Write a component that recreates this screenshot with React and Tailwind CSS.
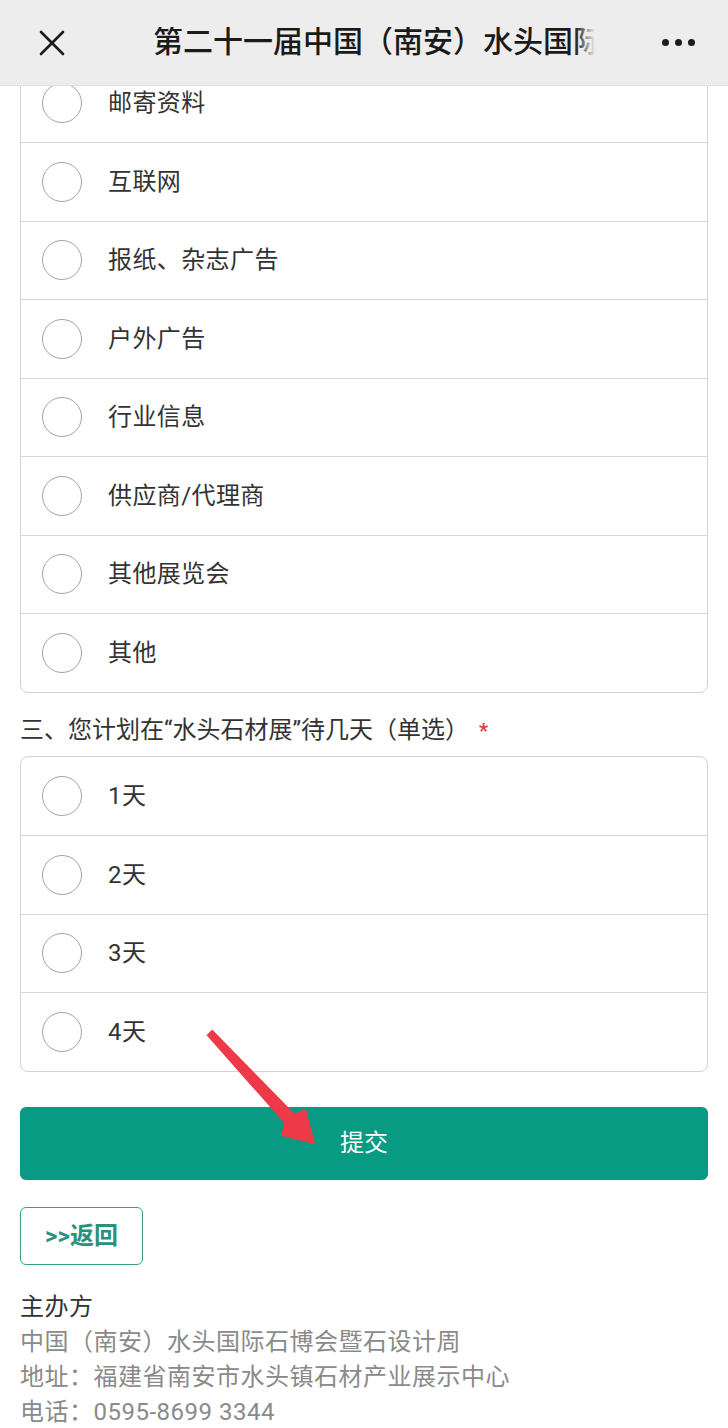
import React from 'react';

const sources = ['邮寄资料', '互联网', '报纸、杂志广告', '户外广告', '行业信息', '供应商/代理商', '其他展览会', '其他'];
const days = ['1天', '2天', '3天', '4天'];

function OptionCard({ items }) {
  return (
    <div className="rounded-[8px] border border-[#d3d3d3] bg-white">
      {items.map((label, i) => (
        <div key={label} className={`flex h-[78.5px] items-center pl-[21px] ${i > 0 ? 'border-t border-[#d6d6d6]' : ''}`}>
          <span className="h-[40px] w-[40px] shrink-0 rounded-full border-[1.5px] border-[#a3a3a3]" />
          <span className="ml-[26px] text-[24px] leading-none tracking-[0.4px] text-[#333]">{label}</span>
        </div>
      ))}
    </div>
  );
}

export default function App() {
  return (
    <div className="relative h-[1428px] w-[728px] overflow-hidden bg-white" style={{ fontFamily: 'Roboto, "Noto Sans CJK SC", sans-serif' }}>
      {/* top bar */}
      <header className="relative z-10 flex h-[86px] items-center border-b border-[#e2e2e2] bg-[#ededed]">
        <div className="w-[153px] shrink-0 pl-[39px]">
          <svg width="26" height="26" viewBox="0 0 26 26" fill="none" stroke="#1c1c1c" strokeWidth="2.6" strokeLinecap="round">
            <path d="M2 2 L24 24 M24 2 L2 24" />
          </svg>
        </div>
        <div className="relative w-[442px] shrink-0 overflow-hidden whitespace-nowrap">
          <span className="text-[30px] font-medium leading-none text-[#1a1a1a]">第二十一届中国（南安）水头国际石博会暨石设计周</span>
          <div className="absolute inset-y-0 right-0 w-[20px] bg-gradient-to-r from-[#ededed]/0 to-[#ededed]" />
        </div>
        <div className="flex flex-1 items-center justify-end gap-[6px] pr-[33px]">
          <span className="h-[7px] w-[7px] rounded-full bg-[#1c1c1c]" />
          <span className="h-[7px] w-[7px] rounded-full bg-[#1c1c1c]" />
          <span className="h-[7px] w-[7px] rounded-full bg-[#1c1c1c]" />
        </div>
      </header>

      {/* scrolled content */}
      <main className="-mt-[23.5px] px-[20px]">
        <OptionCard items={sources} />

        <div className="pt-[19px] pb-[7px] text-[24px] leading-[36px] text-[#333]">
          三、您计划在“水头石材展”待几天（单选）<span className="ml-[10px] text-[20px] font-bold text-[#e53935]">*</span>
        </div>

        <OptionCard items={days} />

        <button className="mt-[35px] flex h-[73px] w-full items-center justify-center rounded-[6px] bg-[#089a82] text-[24px] text-white">
          提交
        </button>

        <button className="mt-[27px] flex h-[58px] w-[123px] items-center justify-center rounded-[6px] border-[1.5px] border-[#3a9d88] text-[24px] font-bold text-[#2b917a]">
          &gt;&gt;返回
        </button>

        <div className="mt-[25px] text-[24px] leading-[35px] tracking-[0.5px]">
          <p className="text-[#333]">主办方</p>
          <p className="text-[#8a8a8a]">中国（南安）水头国际石博会暨石设计周</p>
          <p className="text-[#8a8a8a]">地址：福建省南安市水头镇石材产业展示中心</p>
          <p className="text-[#8a8a8a]">电话：0595-8699 3344</p>
        </div>
      </main>

      {/* red annotation arrow */}
      <svg className="pointer-events-none absolute left-0 top-0" width="728" height="1428" viewBox="0 0 728 1428">
        <polygon
          points="212.2,1030.9 294.4,1114.9 305,1110 314,1143 282,1135 285.6,1123.1 207.8,1035.1"
          fill="#ee3a48"
          stroke="#ee3a48"
          strokeWidth="2"
          strokeLinejoin="round"
        />
      </svg>
    </div>
  );
}
